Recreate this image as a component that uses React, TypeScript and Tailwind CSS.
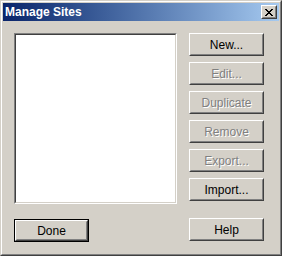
import React from "react";

const font = { fontFamily: '"Liberation Sans", Arial, sans-serif' };

function Btn({
	label,
	disabled,
	isDefault,
}: {
	label: string;
	disabled?: boolean;
	isDefault?: boolean;
}) {
	const inner = (
		<div className="w-full h-full border border-t-white border-l-white border-r-[#404040] border-b-[#404040]">
			<div className="w-full h-full border border-t-[#d4d0c8] border-l-[#d4d0c8] border-r-[#808080] border-b-[#808080] flex items-center justify-center">
				{disabled ? (
					<span className="text-[12px] leading-none text-[#808080] [text-shadow:1px_1px_0_#fff]">
						{label}
					</span>
				) : (
					<span className="text-[12px] leading-none text-black">{label}</span>
				)}
			</div>
		</div>
	);
	return (
		<div
			className={`w-[75px] h-[23px] ${isDefault ? "border border-black" : ""}`}
		>
			{inner}
		</div>
	);
}

export default function App() {
	return (
		<div
			className="w-[282px] h-[256px] bg-[#d4d0c8] border border-t-[#d4d0c8] border-l-[#d4d0c8] border-r-[#404040] border-b-[#404040]"
			style={font}
		>
			<div className="w-full h-full border border-t-white border-l-white border-r-[#808080] border-b-[#808080] p-px flex flex-col">
				{/* Title bar */}
				<div className="h-[18px] flex items-center justify-between pl-[2px] pr-[2px] bg-gradient-to-r from-[#0a246a] to-[#a6caf0]">
					<span className="text-white font-bold text-[12px] leading-none">
						Manage Sites
					</span>
					<div className="w-[16px] h-[14px] border border-t-white border-l-white border-r-[#404040] border-b-[#404040] bg-[#d4d0c8]">
						<div className="w-full h-full border border-t-[#d4d0c8] border-l-[#d4d0c8] border-r-[#808080] border-b-[#808080] flex items-center justify-center">
							<svg width="8" height="7" viewBox="0 0 8 7" shapeRendering="crispEdges">
								<path
									fill="#000"
									d="M0 0h2v1H0zM6 0h2v1H6zM1 1h2v1H1zM5 1h2v1H5zM2 2h4v1H2zM3 3h2v1H3zM2 4h4v1H2zM1 5h2v1H1zM5 5h2v1H5zM0 6h2v1H0zM6 6h2v1H6z"
								/>
							</svg>
						</div>
					</div>
				</div>

				{/* Body */}
				<div className="flex gap-[12px] pl-[11px] pt-[12px]">
					<div className="flex flex-col">
						<div className="w-[163px] h-[171px] border border-t-[#808080] border-l-[#808080] border-r-white border-b-white">
							<div className="w-full h-full bg-white border border-t-[#404040] border-l-[#404040] border-r-[#d4d0c8] border-b-[#d4d0c8]" />
						</div>
						<div className="mt-[15px]">
							<Btn label="Done" isDefault />
						</div>
					</div>
					<div className="flex flex-col">
						<div className="flex flex-col gap-[6px]">
							<Btn label="New..." />
							<Btn label="Edit..." disabled />
							<Btn label="Duplicate" disabled />
							<Btn label="Remove" disabled />
							<Btn label="Export..." disabled />
							<Btn label="Import..." />
						</div>
						<div className="mt-[17px]">
							<Btn label="Help" />
						</div>
					</div>
				</div>
			</div>
		</div>
	);
}
